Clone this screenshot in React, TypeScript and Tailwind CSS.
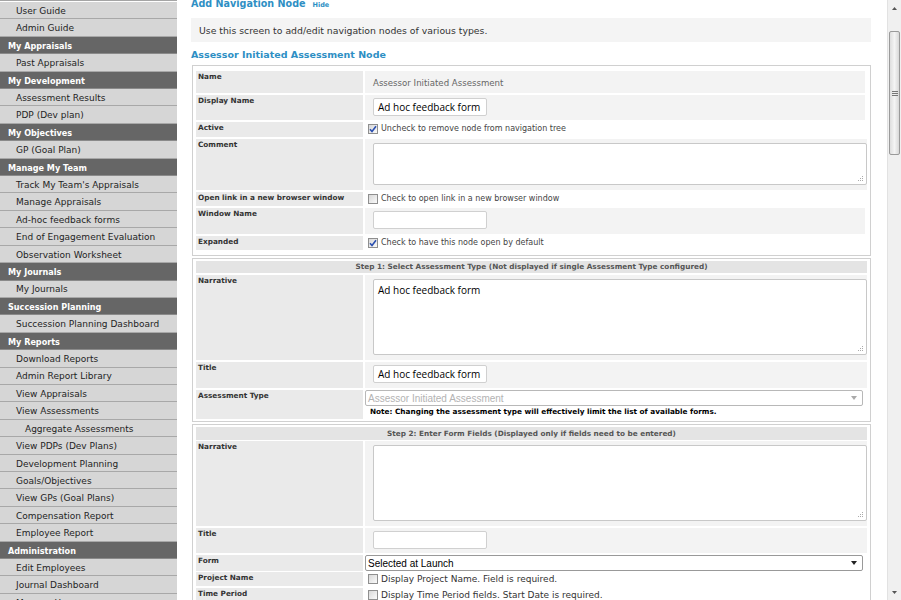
import React from "react";

type NavItem = { label: string; head?: boolean; sub?: boolean };

const nav: NavItem[] = [
  { label: "User Guide" },
  { label: "Admin Guide" },
  { label: "My Appraisals", head: true },
  { label: "Past Appraisals" },
  { label: "My Development", head: true },
  { label: "Assessment Results" },
  { label: "PDP (Dev plan)" },
  { label: "My Objectives", head: true },
  { label: "GP (Goal Plan)" },
  { label: "Manage My Team", head: true },
  { label: "Track My Team's Appraisals" },
  { label: "Manage Appraisals" },
  { label: "Ad-hoc feedback forms" },
  { label: "End of Engagement Evaluation" },
  { label: "Observation Worksheet" },
  { label: "My Journals", head: true },
  { label: "My Journals" },
  { label: "Succession Planning", head: true },
  { label: "Succession Planning Dashboard" },
  { label: "My Reports", head: true },
  { label: "Download Reports" },
  { label: "Admin Report Library" },
  { label: "View Appraisals" },
  { label: "View Assessments" },
  { label: "Aggregate Assessments", sub: true },
  { label: "View PDPs (Dev Plans)" },
  { label: "Development Planning" },
  { label: "Goals/Objectives" },
  { label: "View GPs (Goal Plans)" },
  { label: "Compensation Report" },
  { label: "Employee Report" },
  { label: "Administration", head: true },
  { label: "Edit Employees" },
  { label: "Journal Dashboard" },
  { label: "Manage Users" },
];

const verdana = "font-['DejaVu_Sans',Verdana,sans-serif]";
const inputFont = "font-['Open_Sans','Noto_Sans',sans-serif]";

const Sidebar = () => (
  <div className={`w-[177px] shrink-0 border-t border-[#a5a5a5] pt-[1px] ${verdana}`}>
    {nav.map((n, i) =>
      n.head ? (
        <div
          key={i}
          className="flex h-[17.42px] items-center whitespace-nowrap border-b border-[#8a8a8a] bg-[#666666] pl-[8px] pt-[2px] text-[8.1px] font-bold text-white"
        >
          {n.label}
        </div>
      ) : (
        <div
          key={i}
          className={`flex h-[17.42px] items-center whitespace-nowrap border-b border-[#a8a8a8] bg-[#d6d6d6] pt-[3px] text-[9px] text-[#1e1e1e] ${
            n.sub ? "pl-[25px]" : "pl-[16px]"
          }`}
        >
          {n.label}
        </div>
      )
    )}
  </div>
);

const Check = ({ on }: { on?: boolean }) => (
  <span className="mr-[3px] mt-[1px] inline-flex h-[10px] w-[10px] shrink-0 items-center justify-center border border-[#8f8f8f] bg-gradient-to-br from-[#d8d8d8] to-[#fafafa]">
    {on && (
      <svg width="8" height="8" viewBox="0 0 8 8">
        <path d="M1 4.2 L3 6.5 L7 1.2" fill="none" stroke="#2a4fb0" strokeWidth="1.6" />
      </svg>
    )}
  </span>
);

const Grip = () => (
  <svg className="absolute bottom-[2px] right-[2px]" width="6" height="6" viewBox="0 0 6 6">
    <rect x="4" y="0" width="1" height="1" fill="#aaa" />
    <rect x="2" y="2" width="1" height="1" fill="#aaa" />
    <rect x="4" y="2" width="1" height="1" fill="#aaa" />
    <rect x="0" y="4" width="1" height="1" fill="#aaa" />
    <rect x="2" y="4" width="1" height="1" fill="#aaa" />
    <rect x="4" y="4" width="1" height="1" fill="#aaa" />
  </svg>
);

const TextBox = ({ value }: { value?: string }) => (
  <div
    className={`mt-[3px] flex h-[18px] w-[114px] items-center overflow-hidden whitespace-nowrap rounded-[2px] border border-[#d0d0d0] bg-white pl-[4px] text-[10px] text-black ${inputFont}`}
  >
    {value}
  </div>
);

const TextArea = ({ value, h }: { value?: string; h: string }) => (
  <div
    className={`relative mt-[4px] w-[494px] rounded-[2px] border border-[#c8c8c8] bg-white px-[4px] pt-[3px] text-[10px] leading-[14px] text-black ${inputFont} ${h}`}
  >
    {value}
    <Grip />
  </div>
);

const Label = ({ text }: { text: string }) => (
  <div className="whitespace-nowrap bg-[#eaeaea] pl-[2px] pt-[1px] text-[7.3px] font-bold leading-[10px] text-[#333]">
    {text}
  </div>
);

const Row = ({
  label,
  h,
  gray,
  children,
}: {
  label: string;
  h: string;
  gray?: boolean;
  children?: React.ReactNode;
}) => (
  <div className={`grid grid-cols-[167px_1fr] gap-[2px] ${h}`}>
    <Label text={label} />
    <div className={`pl-[8px] ${gray ? "bg-[#f3f3f3]" : ""}`}>{children}</div>
  </div>
);

const CheckRow = ({
  label,
  text,
  on,
  h,
  big,
}: {
  label: string;
  text: string;
  on?: boolean;
  h: string;
  big?: boolean;
}) => (
  <div className={`grid grid-cols-[167px_1fr] gap-[2px] ${h}`}>
    <Label text={label} />
    <div
      className={`flex items-start whitespace-nowrap pl-[3px] pt-[1px] leading-[12px] ${
        big ? "text-[9px] text-[#333]" : "text-[8px] text-[#444]"
      }`}
    >
      <Check on={on} />
      {text}
    </div>
  </div>
);

const StepHead = ({ text, h }: { text: string; h: string }) => (
  <div
    className={`flex items-center justify-center whitespace-nowrap bg-[#e4e4e4] pt-[1px] text-[7.3px] font-bold text-[#555] ${h}`}
  >
    {text}
  </div>
);

const Select = ({ value, disabled }: { value: string; disabled?: boolean }) => (
  <div
    className={`flex h-[16px] w-[498px] items-center justify-between rounded-[2px] border bg-white pl-[2px] pr-[5px] font-['Liberation_Sans',Arial,sans-serif] text-[10px] ${
      disabled ? "border-[#b8b8b8] text-[#b3b3b3]" : "border-[#999] text-black"
    }`}
  >
    <span>{value}</span>
    <svg width="6" height="4" viewBox="0 0 6 4">
      <path d="M0 0 L6 0 L3 4 Z" fill={disabled ? "#aaa" : "#222"} />
    </svg>
  </div>
);

const Scrollbar = () => (
  <div className="flex w-[14px] shrink-0 flex-col border-l border-[#e2e2e2] bg-[#f0f0f0]">
    <div className="flex h-[16px] items-center justify-center">
      <svg width="5" height="3" viewBox="0 0 5 3">
        <path d="M0 3 L5 3 L2.5 0 Z" fill="#555" />
      </svg>
    </div>
    <div className="mx-[1px] mt-[15px] flex h-[124px] items-center justify-center rounded-[2px] border border-[#9a9a9a] bg-gradient-to-r from-[#dedede] via-[#f4f4f4] to-[#d8d8d8]">
      <div className="flex flex-col gap-[1px]">
        <div className="h-[1px] w-[6px] bg-[#777]" />
        <div className="h-[1px] w-[6px] bg-[#777]" />
        <div className="h-[1px] w-[6px] bg-[#777]" />
      </div>
    </div>
    <div className="flex-1" />
    <div className="flex h-[16px] items-center justify-center">
      <svg width="5" height="3" viewBox="0 0 5 3">
        <path d="M0 0 L5 0 L2.5 3 Z" fill="#555" />
      </svg>
    </div>
  </div>
);

export default function App() {
  return (
    <div className={`flex h-[600px] w-[901px] overflow-hidden bg-white ${verdana}`}>
      <Sidebar />
      <div className="flex-1 overflow-hidden pl-[14px] pr-[16px]">
        <div className="-mt-[3px] flex items-baseline gap-[7px]">
          <span className="text-[9.6px] font-bold text-[#2e8fc4]">Add Navigation Node</span>
          <span className="text-[6.5px] font-bold text-[#2e8fc4]">Hide</span>
        </div>
        <div className="mt-[7px] flex h-[24px] items-center bg-[#f4f4f4] pl-[8px] pt-[1px] text-[9.3px] text-[#333]">
          Use this screen to add/edit navigation nodes of various types.
        </div>
        <div className="mt-[7px] text-[9.5px] font-bold leading-[12px] text-[#2e8fc4]">
          Assessor Initiated Assessment Node
        </div>

        <div className="ml-[1px] mt-[4px] flex flex-col gap-[2px] border border-[#d0d0d0] pb-[5px] pl-[3px] pr-[5px] pt-[5px]">
          <Row label="Name" h="h-[22px]" gray>
            <div className="pt-[6px] text-[8.6px] text-[#666]">Assessor Initiated Assessment</div>
          </Row>
          <Row label="Display Name" h="h-[25px]" gray>
            <TextBox value="Ad hoc feedback form" />
          </Row>
          <CheckRow label="Active" text="Uncheck to remove node from navigation tree" on h="h-[15px]" />
          <Row label="Comment" h="h-[51px]" gray>
            <TextArea h="h-[42px]" />
          </Row>
          <CheckRow label="Open link in a new browser window" text="Check to open link in a new browser window" h="h-[14px]" />
          <Row label="Window Name" h="h-[26px]" gray>
            <TextBox />
          </Row>
          <CheckRow label="Expanded" text="Check to have this node open by default" on h="h-[14px]" />
        </div>

        <div className="ml-[1px] mt-[2px] flex flex-col gap-[2px] border border-[#d0d0d0] px-[3px] pb-[2px] pt-[2px]">
          <StepHead
            h="h-[12px]"
            text="Step 1: Select Assessment Type (Not displayed if single Assessment Type configured)"
          />
          <Row label="Narrative" h="h-[85px]" gray>
            <TextArea value="Ad hoc feedback form" h="h-[76px]" />
          </Row>
          <Row label="Title" h="h-[26px]" gray>
            <TextBox value="Ad hoc feedback form" />
          </Row>
          <div className="grid h-[29px] grid-cols-[167px_1fr] gap-[2px]">
            <Label text="Assessment Type" />
            <div className="-ml-[1px] pl-[1px]">
              <Select value="Assessor Initiated Assessment" disabled />
              <div className="whitespace-nowrap pl-[5px] pt-[1px] text-[7.3px] font-bold leading-[10px] text-black">
                Note: Changing the assessment type will effectively limit the list of available forms.
              </div>
            </div>
          </div>
        </div>

        <div className="ml-[1px] mt-[2px] flex flex-col gap-[1px] border border-[#d0d0d0] px-[3px] pt-[2px]">
          <StepHead
            h="h-[13px]"
            text="Step 2: Enter Form Fields (Displayed only if fields need to be entered)"
          />
          <div className="flex flex-col gap-[2px]">
            <Row label="Narrative" h="h-[85px]" gray>
              <TextArea h="h-[76px]" />
            </Row>
            <Row label="Title" h="h-[25px]" gray>
              <TextBox />
            </Row>
            <div className="grid h-[15px] grid-cols-[167px_1fr] gap-[2px]">
              <Label text="Form" />
              <div>
                <Select value="Selected at Launch" />
              </div>
            </div>
            <CheckRow label="Project Name" text="Display Project Name. Field is required." h="h-[14px]" big />
            <CheckRow label="Time Period" text="Display Time Period fields. Start Date is required." h="h-[14px]" big />
          </div>
        </div>
      </div>
      <Scrollbar />
    </div>
  );
}
